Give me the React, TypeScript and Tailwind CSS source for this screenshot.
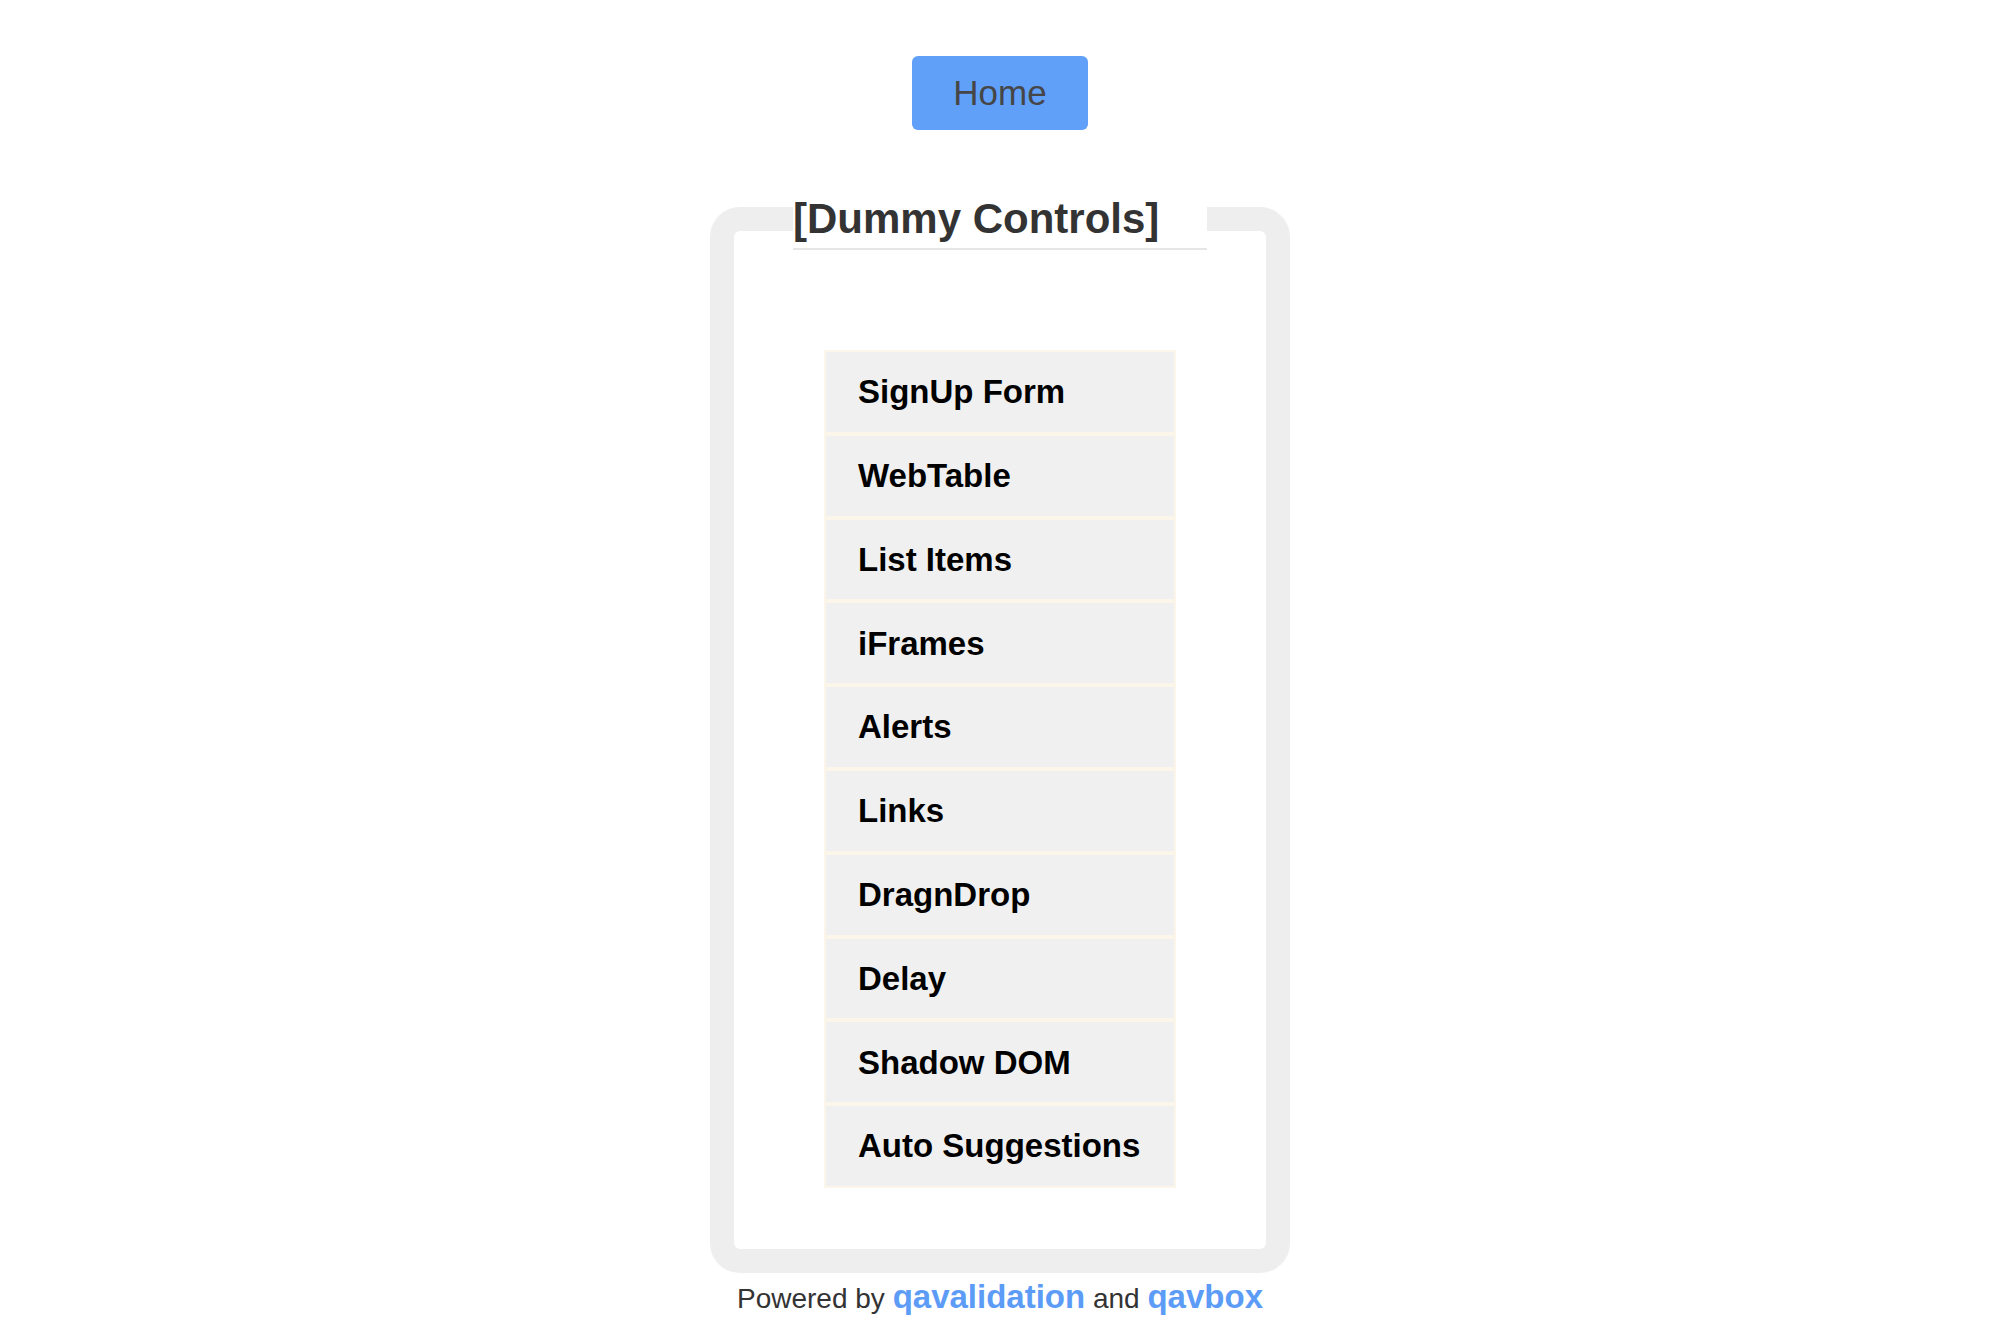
import React from 'react';

const items = [
  'SignUp Form',
  'WebTable',
  'List Items',
  'iFrames',
  'Alerts',
  'Links',
  'DragnDrop',
  'Delay',
  'Shadow DOM',
  'Auto Suggestions',
];

const App: React.FC = () => {
  return (
    <div className="min-h-screen bg-white font-['Liberation_Sans',Arial,sans-serif] flex flex-col items-center">
      <button className="mt-[56px] w-[176px] h-[74px] rounded-[6px] bg-[#60a0f8] text-[35px] text-[#464646]">
        Home
      </button>

      <fieldset className="mt-[58px] w-[580px] border-[24px] border-[#eeeeee] rounded-[30px] p-0 m-0">
        <legend className="mx-auto w-[414px] text-[42px] leading-[52px] font-bold text-[#333333] pt-[5px] pb-[3px] border-b-2 border-[#e6e6e6]">
          [Dummy Controls]
        </legend>

        <ul className="mt-[100px] mb-[61px] mx-auto w-[352px] flex flex-col">
          {items.map((item) => (
            <li
              key={item}
              className="h-[83.8px] border-2 border-[#fcf6ea] bg-[#f0f0f0] pl-[32px] flex items-center text-[33px] font-bold text-black"
            >
              {item}
            </li>
          ))}
        </ul>
      </fieldset>

      <p className="mt-[6px] text-[28px] leading-[36px] text-[#333333]">
        Powered by <a className="text-[33px] font-bold text-[#5c9cf7]">qavalidation</a> and{' '}
        <a className="text-[33px] font-bold text-[#5c9cf7]">qavbox</a>
      </p>
    </div>
  );
};

export default App;
